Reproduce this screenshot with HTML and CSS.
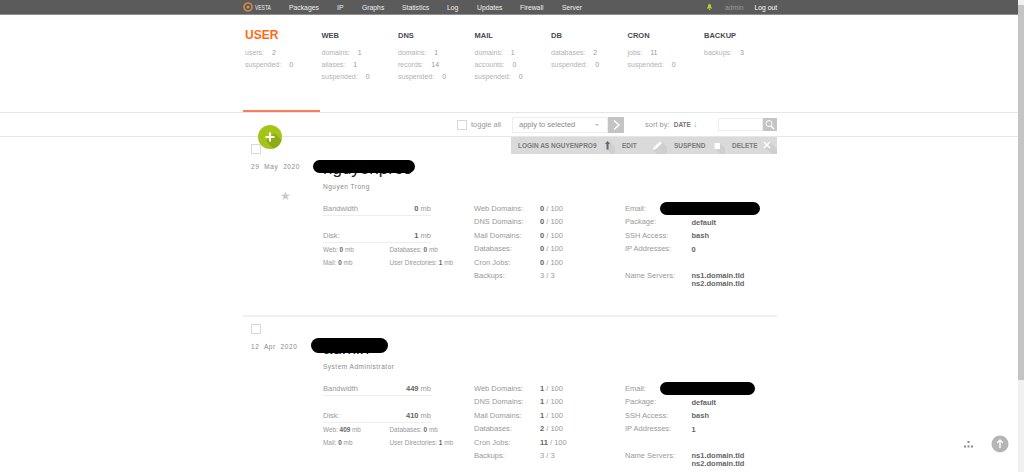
FILE: index.html
```html
<!DOCTYPE html>
<html lang="en-us">
  <head>
    <meta charset="utf-8" />
    <title>Vesta - USER</title>
    <link rel="stylesheet" href="styles.css">
  </head>
  <body>
    <div class="page">
      <nav class="topbar">
        <a class="logo">
          <svg width="10" height="10" viewBox="0 0 10 10"><circle cx="5" cy="5" r="4" fill="none" stroke="#d9853f" stroke-width="1.700"/><circle cx="5" cy="5" r="1.500" fill="#b59a82"/></svg>
          <span class="logo-text">VESTA</span>
        </a>
        <ul class="menu">
          <li class="m-packages">Packages</li>
          <li class="m-ip">IP</li>
          <li class="m-graphs">Graphs</li>
          <li class="m-statistics">Statistics</li>
          <li class="m-log">Log</li>
          <li class="m-updates">Updates</li>
          <li class="m-firewall">Firewall</li>
          <li class="m-server">Server</li>
        </ul>
        <div class="session">
          <svg width="5" height="6" viewBox="0 0 5 6"><path d="M2.500 0C1.200 0 1 1.200 1 2.600L0 4.600h5L4 2.600C4 1.200 3.800 0 2.500 0zM1.800 5h1.400v1H1.800z" fill="#b6d31f"/></svg>
          <span class="user">admin</span>
          <span class="logout">Log out</span>
        </div>
      </nav>

      <section class="stats">
        <div class="stat active">
          <h2>USER</h2>
          <p>users: <b>2</b></p>
          <p>suspended: <b>0</b></p>
        </div>
        <div class="stat">
          <h3>WEB</h3>
          <p>domains: <b>1</b></p>
          <p>aliases: <b>1</b></p>
          <p>suspended: <b>0</b></p>
        </div>
        <div class="stat">
          <h3>DNS</h3>
          <p>domains: <b>1</b></p>
          <p>records: <b>14</b></p>
          <p>suspended: <b>0</b></p>
        </div>
        <div class="stat">
          <h3>MAIL</h3>
          <p>domains: <b>1</b></p>
          <p>accounts: <b>0</b></p>
          <p>suspended: <b>0</b></p>
        </div>
        <div class="stat">
          <h3>DB</h3>
          <p>databases: <b>2</b></p>
          <p>suspended: <b>0</b></p>
        </div>
        <div class="stat">
          <h3>CRON</h3>
          <p>jobs: <b>11</b></p>
          <p>suspended: <b>0</b></p>
        </div>
        <div class="stat">
          <h3>BACKUP</h3>
          <p>backups: <b>3</b></p>
        </div>
      </section>

      <div class="tabline"><span></span></div>

      <section class="toolbar">
        <button class="add">
          <svg width="24" height="24" viewBox="0 0 24 24"><circle cx="12" cy="12" r="12" fill="#a3c51a"/><path d="M16 8l7.600 7A12 12 0 0 1 15 23.600L8 16z" fill="#8dab18"/><path d="M11 7.500h2V11h3.500v2H13v3.500h-2V13H7.500v-2H11z" fill="#fff"/></svg>
        </button>
        <label class="toggle"><span class="check"></span>toggle all</label>
        <div class="select">apply to selected<i></i></div>
        <span class="go">
          <svg width="16" height="16" viewBox="0 0 16 16"><path d="M6 3.500L11 8l-5 4.500" fill="none" stroke="#fff" stroke-width="1.300"/></svg>
        </span>
        <span class="sort">sort by: <b>DATE</b> <em>&#8595;</em></span>
        <span class="search"></span>
        <span class="search-btn">
          <svg width="14" height="13" viewBox="0 0 14 13"><circle cx="6" cy="5.500" r="3" fill="none" stroke="#fff" stroke-width="1"/><path d="M8 8l3 3" stroke="#fff" stroke-width="1.400"/></svg>
        </span>
      </section>

      <article class="row">
        <div class="actions">
          <span class="act a-login">LOGIN AS NGUYENPRO9
            <svg width="17" height="17" viewBox="0 0 17 17"><path d="M9 6l2-2 6 6v7h-4l-4-5z" fill="#cfcfcf"/><path d="M9.500 4L12 7h-1.500v5.500h-2V7H7z" fill="#666"/></svg>
          </span>
          <span class="act a-edit">EDIT
            <svg width="17" height="17" viewBox="0 0 17 17"><path d="M3 13l9-8 5 5v7H7z" fill="#cfcfcf"/><path d="M3 13l1-3 6-5.500 2 1.500-6 6z" fill="#fff"/></svg>
          </span>
          <span class="act a-suspend">SUSPEND
            <svg width="17" height="17" viewBox="0 0 17 17"><path d="M12 6l5 5v6h-5l-4-5z" fill="#cfcfcf"/><path d="M6.500 6H12v6H6.500z" fill="#fff"/></svg>
          </span>
          <span class="act a-delete">DELETE
            <svg width="17" height="17" viewBox="0 0 17 17"><path d="M10 5l7 7v5h-5l-7-6z" fill="#cfcfcf"/><path d="M4 5l6 6M10 5l-6 6" stroke="#fff" stroke-width="1.400"/></svg>
          </span>
        </div>
        <div class="side">
          <span class="check"></span>
          <div class="date">29&nbsp; May&nbsp; 2020</div>
          <div class="star">&#9733;</div>
        </div>
        <div class="main">
          <h1 class="name">nguyenpro9</h1>
          <i class="redact r-name1"></i>
          <div class="fullname">Nguyen Trong</div>
          <div class="cols">
            <div class="usage">
              <div class="bar"><span>Bandwidth</span><span><b>0</b> mb</span></div>
              <div class="bar"><span>Disk:</span><span><b>1</b> mb</span></div>
              <div class="parts">
                <span>Web: <b>0</b> mb</span><span>Databases: <b>0</b> mb</span>
                <span>Mail: <b>0</b> mb</span><span>User Directories: <b>1</b> mb</span>
              </div>
            </div>
            <dl class="limits">
              <dt>Web Domains:</dt><dd><b>0</b> / 100</dd>
              <dt>DNS Domains:</dt><dd><b>0</b> / 100</dd>
              <dt>Mail Domains:</dt><dd><b>0</b> / 100</dd>
              <dt>Databases:</dt><dd><b>0</b> / 100</dd>
              <dt>Cron Jobs:</dt><dd><b>0</b> / 100</dd>
              <dt>Backups:</dt><dd>3 / 3</dd>
            </dl>
            <dl class="info">
              <dt>Email:</dt><dd><i class="redact r-mail1"></i></dd>
              <dt>Package:</dt><dd><b>default</b></dd>
              <dt>SSH Access:</dt><dd><b>bash</b></dd>
              <dt>IP Addresses:</dt><dd><b>0</b></dd>
              <dt class="blank"></dt><dd></dd>
              <dt>Name Servers:</dt><dd><b>ns1.domain.tld<br>ns2.domain.tld</b></dd>
            </dl>
          </div>
        </div>
      </article>

      <article class="row">
        <div class="side">
          <span class="check"></span>
          <div class="date">12&nbsp; Apr&nbsp; 2020</div>
        </div>
        <div class="main">
          <h1 class="name">admin</h1>
          <i class="redact r-name2"></i>
          <div class="fullname">System Administrator</div>
          <div class="cols">
            <div class="usage">
              <div class="bar"><span>Bandwidth</span><span><b>449</b> mb</span></div>
              <div class="bar"><span>Disk:</span><span><b>410</b> mb</span></div>
              <div class="parts">
                <span>Web: <b>409</b> mb</span><span>Databases: <b>0</b> mb</span>
                <span>Mail: <b>0</b> mb</span><span>User Directories: <b>1</b> mb</span>
              </div>
            </div>
            <dl class="limits">
              <dt>Web Domains:</dt><dd><b>1</b> / 100</dd>
              <dt>DNS Domains:</dt><dd><b>1</b> / 100</dd>
              <dt>Mail Domains:</dt><dd><b>1</b> / 100</dd>
              <dt>Databases:</dt><dd><b>2</b> / 100</dd>
              <dt>Cron Jobs:</dt><dd><b>11</b> / 100</dd>
              <dt>Backups:</dt><dd>3 / 3</dd>
            </dl>
            <dl class="info">
              <dt>Email:</dt><dd><i class="redact r-mail2"></i></dd>
              <dt>Package:</dt><dd><b>default</b></dd>
              <dt>SSH Access:</dt><dd><b>bash</b></dd>
              <dt>IP Addresses:</dt><dd><b>1</b></dd>
              <dt class="blank"></dt><dd></dd>
              <dt>Name Servers:</dt><dd><b>ns1.domain.tld<br>ns2.domain.tld</b></dd>
            </dl>
          </div>
        </div>
      </article>

      <div class="float-tools">
        <svg width="9" height="7" viewBox="0 0 9 7"><path d="M3.500 0h2v2h-2zM0 4.500h2v2H0zM3.500 4.500h2v2h-2zM7 4.500h2v2H7z" fill="#8a8a8a"/></svg>
        <span class="to-top">
          <svg width="18" height="18" viewBox="0 0 18 18"><circle cx="9" cy="9" r="8.500" fill="#b5b5b5"/><path d="M9 13V5.500M6 8l3-3 3 3" fill="none" stroke="#fff" stroke-width="1.400"/></svg>
        </span>
      </div>
    </div>
    <div class="scrollbar"><span></span></div>
  </body>
</html>
```

FILE: styles.css
```css
* {
  box-sizing: border-box;
}

html,
body {
  height: 100%;
}

body {
  margin: 0;
  display: flex;
  overflow: hidden;
  font-family: "Liberation Sans", Arial, sans-serif;
  font-size: 7px;
  color: #9a9a9a;
  background-color: #fff;
}

.page {
  position: relative;
  flex: 1;
  min-width: 0;
}

h1,
h2,
h3,
p,
dl,
dd,
ul {
  margin: 0;
  padding: 0;
}

.scrollbar {
  width: 6px;
  padding-top: 5px;
  background-color: #f1f1f1;
}

.scrollbar span {
  display: block;
  height: 375px;
  background-color: #c4c4c4;
}

/* top menu */
.topbar {
  display: flex;
  align-items: center;
  height: 15px;
  padding-left: 243px;
  background-color: #5b5b5b;
  border-bottom: 1px solid #8f8f8f;
  color: #f0f0f0;
  font-size: 6.800px;
}

.logo {
  display: flex;
  align-items: center;
  width: 46px;
  flex: none;
}

.logo-text {
  margin-left: 2px;
  font-size: 8px;
  transform: scaleX(0.62);
  transform-origin: left center;
}

.menu {
  display: flex;
  list-style: none;
}

.m-packages { width: 48px; }
.m-ip { width: 25px; }
.m-graphs { width: 40px; }
.m-statistics { width: 45px; }
.m-log { width: 30px; }
.m-updates { width: 43px; }
.m-firewall { width: 42px; }
.m-server { width: 145px; }

.session {
  display: flex;
  align-items: center;
}

.session .user {
  margin-left: 13px;
  color: #9a9a9a;
}

.session .logout {
  margin-left: 11px;
  color: #fff;
}

/* totals per section */
.stats {
  display: flex;
  height: 95px;
  padding: 13px 0 0 245px;
}

.stat {
  width: 76.500px;
  flex: none;
}

.stat p {
  height: 12px;
  line-height: 12px;
  color: #b2b2b2;
  white-space: nowrap;
}

.stat b {
  margin-left: 6px;
  font-weight: normal;
  color: #999;
}

.stat h2 {
  height: 18px;
  margin-bottom: 1px;
  font-size: 12px;
  line-height: 14px;
  color: #ff6a13;
}

.stat h3 {
  height: 19px;
  padding-top: 2px;
  font-size: 7.500px;
  line-height: 12px;
  color: #4a4a55;
}

.tabline {
  height: 2px;
  padding-left: 243px;
}

.tabline span {
  display: block;
  width: 77px;
  height: 2px;
  background-color: #ff7a5a;
}

/* actions on the list */
.toolbar {
  position: relative;
  display: flex;
  align-items: center;
  height: 25px;
  padding-left: 457px;
  border-top: 1px solid #e6e6e6;
  border-bottom: 1px solid #e6e6e6;
  font-size: 7.500px;
  color: #999;
}

.add {
  position: absolute;
  left: 258px;
  top: 12px;
  width: 24px;
  height: 24px;
  padding: 0;
  border: 0;
  background: none;
  line-height: 0;
}

.check {
  display: block;
  width: 10px;
  height: 10px;
  border: 1px solid #d8d8d8;
  background-color: #fff;
}

.toggle {
  display: flex;
  align-items: center;
  gap: 4px;
  width: 55px;
}

.select {
  display: flex;
  align-items: center;
  justify-content: space-between;
  width: 96px;
  height: 16px;
  padding: 0 8px 0 6px;
  border: 1px solid #eee;
  font-size: 7.500px;
  color: #888;
}

.select i {
  width: 0;
  height: 0;
  border: 2px solid transparent;
  border-top: 2px solid #bbb;
  margin-top: 2px;
}

.go {
  width: 16px;
  height: 16px;
  background-color: #c4c4c4;
  line-height: 0;
}

.sort {
  width: 73px;
  margin-left: 21px;
  color: #999;
}

.sort b {
  margin-left: 2px;
  font-size: 6.500px;
  color: #777;
}

.sort em {
  font-style: normal;
  font-size: 9px;
  line-height: 8px;
  color: #aaa;
}

.search {
  width: 45px;
  height: 13px;
  border: 1px solid #eee;
}

.search-btn {
  width: 14px;
  height: 13px;
  background-color: #c4c4c4;
  line-height: 0;
}

/* one account */
.row {
  position: relative;
  display: flex;
  width: 534px;
  height: 180px;
  margin-left: 243px;
  padding-top: 7px;
  border-bottom: 2px solid #f0f0f0;
}

.row:last-of-type {
  height: auto;
  border-bottom: 0;
}

.actions {
  position: absolute;
  top: 0;
  right: 0;
  display: flex;
  align-items: center;
  width: 266px;
  height: 17px;
  background-color: #dadada;
  font-size: 6.500px;
  font-weight: bold;
  color: #7a7a7a;
}

.act {
  display: flex;
  align-items: center;
  justify-content: space-between;
  height: 17px;
  padding-left: 7px;
}

.a-login { width: 104px; }
.a-edit { width: 52px; }
.a-suspend { width: 58px; }
.a-delete { width: 52px; }

.side {
  width: 80px;
  flex: none;
  padding-left: 8px;
}

.date {
  margin-top: 9px;
  font-size: 6.500px;
  letter-spacing: 0.600px;
  color: #8a8a8a;
  white-space: nowrap;
}

.star {
  margin: 20px 0 0 29px;
  font-size: 12px;
  line-height: 12px;
  color: #c8c8c8;
}

.main {
  position: relative;
  flex: 1;
}

.name {
  height: 36px;
  padding-top: 15px;
  font-size: 17px;
  font-weight: normal;
  line-height: 20px;
  color: #222;
}

.fullname {
  height: 14px;
  font-size: 6.500px;
  line-height: 14px;
  letter-spacing: 0.500px;
  color: #8a8a8a;
}

.redact {
  position: absolute;
  display: block;
  background-color: #000;
  border-radius: 8px;
}

.r-name1 { left: -10px; top: 16px; width: 102px; height: 13px; }
.r-name2 { left: -12px; top: 14px; width: 77px; height: 15px; }
.r-mail1 { left: -32px; top: 0; width: 100px; height: 13px; }
.r-mail2 { left: -32px; top: 0; width: 95px; height: 13px; }

.cols {
  display: flex;
  margin-top: 8px;
  font-size: 7.500px;
  color: #999;
}

.usage {
  width: 151px;
  flex: none;
}

.bar {
  display: flex;
  justify-content: space-between;
  width: 108px;
  height: 14px;
  margin-bottom: 13px;
  line-height: 13px;
  border-bottom: 1px solid #eee;
}

.bar:nth-child(2) {
  margin-bottom: 0;
}

.bar b,
.parts b,
.limits b,
.info b {
  color: #666;
}

.parts {
  display: grid;
  grid-template-columns: 66.500px auto;
  grid-auto-rows: 13.300px;
  font-size: 6.400px;
  line-height: 13.300px;
  white-space: nowrap;
}

.limits,
.info {
  position: relative;
  display: grid;
  grid-auto-rows: 13.400px;
  line-height: 13.400px;
  width: 151px;
  flex: none;
}

.limits {
  grid-template-columns: 66px auto;
}

.info {
  grid-template-columns: 66.500px auto;
}

.info dd {
  position: relative;
}

.info b {
  display: block;
  line-height: 8px;
  padding-top: 3.500px;
}

.float-tools {
  position: absolute;
  right: 9px;
  top: 435px;
  display: flex;
  align-items: center;
  gap: 18px;
}

.to-top {
  line-height: 0;
}
```
